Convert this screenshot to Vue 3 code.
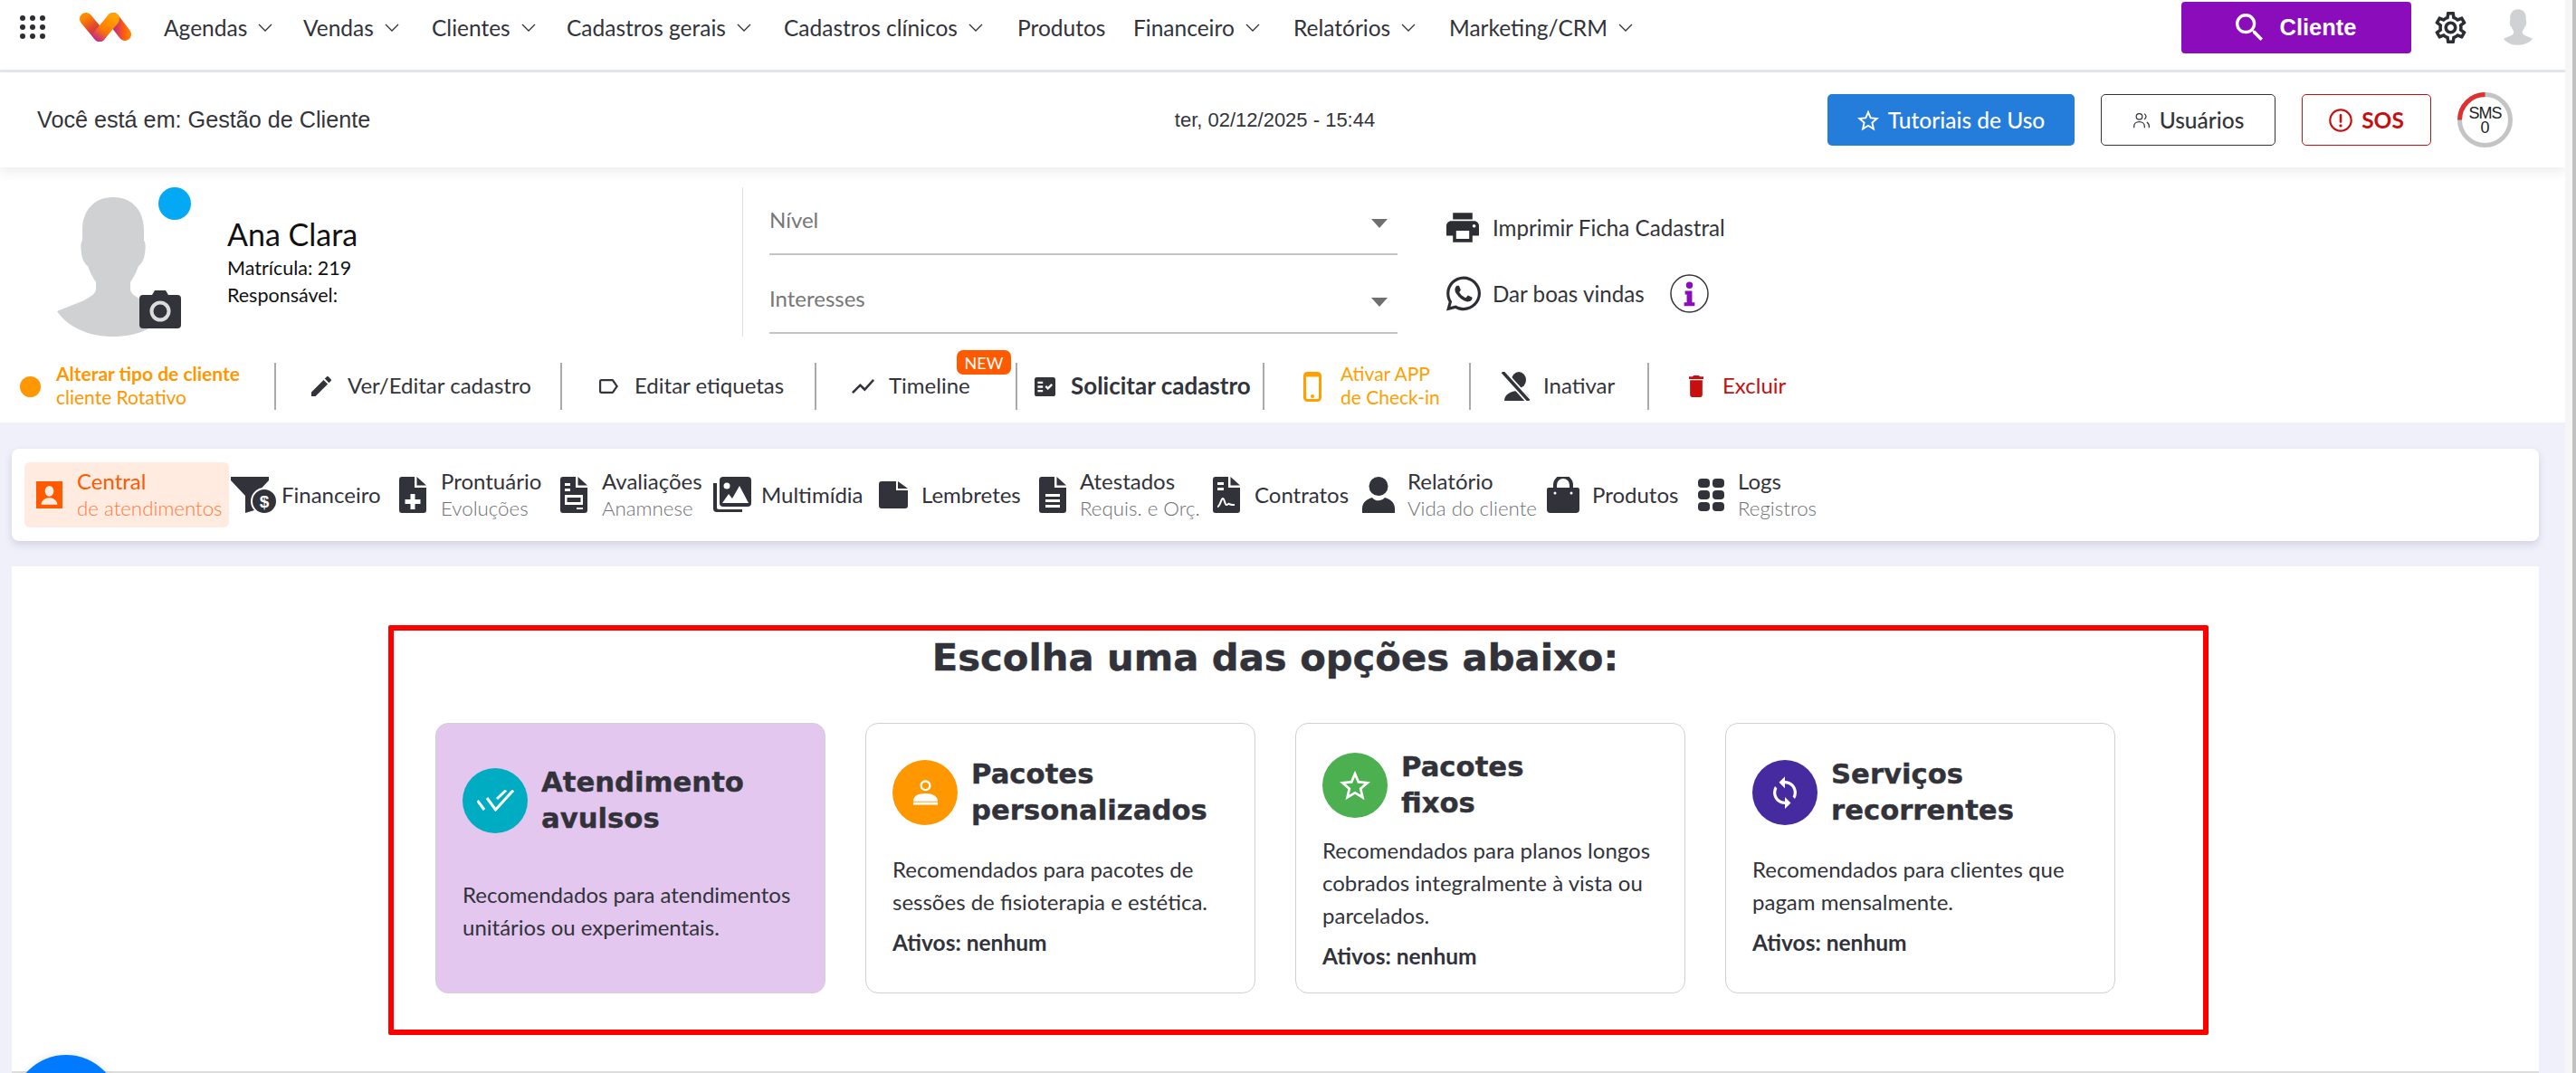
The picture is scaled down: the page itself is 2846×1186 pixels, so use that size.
<script setup>
const person = 'M62 0C84 0 96 16 96 36L96 48C98 50 98 56 97 62C96 70 93 74 90 76C88 82 85 88 81 94L81 102C82 108 88 110 94 114L124 126C112 144 88 154 62 154C36 154 12 144 0 126L30 114C36 110 42 108 43 102L43 94C39 88 36 82 34 76C31 74 28 70 27 62C26 56 26 50 28 48L28 36C28 16 40 0 62 0Z';
const docBody = 'M3 0H17V12H30V37a3 3 0 0 1-3 3H3a3 3 0 0 1-3-3V3a3 3 0 0 1 3-3Z';
const docFold = '<path d="M19.5 0L30 9.5H19.5Z"/>';

const icons = {
  search: { vb: '3 3 17.5 17.5', body: '<path d="M15.5 14h-.79l-.28-.27A6.471 6.471 0 0 0 16 9.5 6.5 6.5 0 1 0 9.5 16c1.61 0 3.09-.59 4.23-1.57l.27.28v.79l5 4.99L20.49 19l-4.99-5zm-6 0C7.01 14 5 11.99 5 9.5S7.01 5 9.5 5 14 7.01 14 9.5 11.99 14 9.5 14z"/>' },
  gear: { vb: '2 2 20 20', body: '<path d="M19.43 12.98c.04-.32.07-.64.07-.98 0-.34-.03-.66-.07-.98l2.11-1.65c.19-.15.24-.42.12-.64l-2-3.46c-.09-.16-.26-.25-.44-.25-.06 0-.12.01-.17.03l-2.49 1c-.52-.4-1.08-.73-1.69-.98l-.38-2.65C14.46 2.18 14.25 2 14 2h-4c-.25 0-.46.18-.49.42l-.38 2.65c-.61.25-1.17.59-1.69.98l-2.49-1c-.06-.02-.12-.03-.18-.03-.17 0-.34.09-.43.25l-2 3.46c-.13.22-.07.49.12.64l2.11 1.65c-.04.32-.07.65-.07.98 0 .33.03.66.07.98l-2.11 1.65c-.19.15-.24.42-.12.64l2 3.46c.09.16.26.25.44.25.06 0 .12-.01.17-.03l2.49-1c.52.4 1.08.73 1.69.98l.38 2.65c.03.24.24.42.49.42h4c.25 0 .46-.18.49-.42l.38-2.65c.61-.25 1.17-.59 1.69-.98l2.49 1c.06.02.12.03.18.03.17 0 .34-.09.43-.25l2-3.46c.12-.22.07-.49-.12-.64l-2.11-1.65zm-1.98-1.71c.04.31.05.52.05.73 0 .21-.02.43-.05.73l-.14 1.13.89.7 1.08.84-.7 1.21-1.27-.51-1.04-.42-.9.68c-.43.32-.84.56-1.25.73l-1.06.43-.16 1.13-.2 1.35h-1.4l-.19-1.35-.16-1.13-1.06-.43c-.43-.18-.83-.41-1.23-.71l-.91-.7-1.06.43-1.27.51-.7-1.21 1.08-.84.89-.7-.14-1.13c-.03-.31-.05-.54-.05-.74s.02-.43.05-.73l.14-1.13-.89-.7-1.08-.84.7-1.21 1.27.51 1.04.42.9-.68c.43-.32.84-.56 1.25-.73l1.06-.43.16-1.13.2-1.35h1.39l.19 1.35.16 1.13 1.06.43c.43.18.83.41 1.23.71l.91.7 1.06-.43 1.27-.51.7 1.21-1.07.85-.89.7.14 1.13zM12 8c-2.21 0-4 1.79-4 4s1.79 4 4 4 4-1.79 4-4-1.79-4-4-4zm0 6c-1.1 0-2-.9-2-2s.9-2 2-2 2 .9 2 2-.9 2-2 2z"/>' },
  star: { vb: '2 2 20 19', body: '<path d="M22 9.24l-7.19-.62L12 2 9.19 8.63 2 9.24l5.46 4.73L5.82 21 12 17.27 18.18 21l-1.63-7.03L22 9.24zM12 15.4l-3.76 2.27 1-4.28-3.32-2.88 4.38-.38L12 6.1l1.71 4.04 4.38.38-3.32 2.88 1 4.28L12 15.4z"/>' },
  users: { vb: '0 0 24 24', body: '<g fill="none" stroke="currentColor" stroke-width="1.5"><circle cx="9" cy="7" r="4"/><path d="M2 22v-2c0-3.5 3-6 7-6s7 2.500 7 6v2"/><path d="M15.500 3.300a4 4 0 0 1 0 7.400M19 14.600c1.800 1 3 2.900 3 5.400v2"/></g>' },
  alert: { vb: '0 0 24 24', body: '<circle cx="12" cy="12" r="10.800" fill="none" stroke="currentColor" stroke-width="2"/><rect x="10.800" y="5.500" width="2.400" height="9" rx="1"/><circle cx="12" cy="17.500" r="1.500"/>' },
  pencil: { vb: '3 3 18 18', body: '<path d="M3 17.250V21h3.750L17.810 9.940l-3.750-3.750L3 17.250zM20.710 7.040a1 1 0 0 0 0-1.410l-2.340-2.340a1 1 0 0 0-1.410 0l-1.830 1.830 3.750 3.750 1.830-1.830z"/>' },
  tag: { vb: '3 5 19 14', body: '<path d="M17.630 5.840C17.270 5.330 16.670 5 16 5L5 5.010C3.900 5.010 3 5.900 3 7v10c0 1.100.9 1.990 2 1.990L16 19c.67 0 1.270-.33 1.630-.84L22 12l-4.370-6.160zM16 17H5V7h11l3.550 5L16 17z"/>' },
  chart: { vb: '2 5.500 20 13', body: '<path d="M3.500 18.490l6-6.010 4 4L22 6.920l-1.410-1.410-7.090 7.970-4-4L2 16.990z"/>' },
  fact: { vb: '2 3 20 18', body: '<path d="M20 3H4c-1.100 0-2 .9-2 2v14c0 1.100.9 2 2 2h16c1.100 0 2-.9 2-2V5c0-1.100-.9-2-2-2zM10 17H5v-2h5v2zm0-4H5v-2h5v2zm0-4H5V7h5v2zm4.820 6L12 12.160l1.410-1.410 1.410 1.420L17.990 9l1.420 1.420L14.820 15z"/>' },
  mobile: { vb: '0 0 20 33', body: '<rect x="1.500" y="1.500" width="17" height="30" rx="3" fill="none" stroke="currentColor" stroke-width="3"/><rect x="1.500" y="1.500" width="17" height="4" /><circle cx="10" cy="27" r="2"/>' },
  personOff: { vb: '0 0 34 32', body: '<ellipse cx="20" cy="9" rx="8" ry="9"/><path d="M4 32c0-7 7-11 15-11s13 4 13 11z"/><path d="M3 1L31 32" stroke="#fff" stroke-width="7"/><path d="M2 0L31 32" stroke="currentColor" stroke-width="3.500"/>' },
  trash: { vb: '5 3 14 18', body: '<path d="M6 19c0 1.100.9 2 2 2h8c1.100 0 2-.9 2-2V7H6v12zM19 4h-3.500l-1-1h-5l-1 1H5v2h14V4z"/>' },
  print: { vb: '2 3 20 18', body: '<path d="M19 8H5c-1.660 0-3 1.340-3 3v6h4v4h12v-4h4v-6c0-1.660-1.340-3-3-3zm-3 11H8v-5h8v5zm3-7c-.55 0-1-.45-1-1s.45-1 1-1 1 .45 1 1-.45 1-1 1zm-1-9H6v4h12V3z"/>' },
  whatsapp: { vb: '0 32 448 448', body: '<path d="M380.900 97.100C339 55.100 283.200 32 223.900 32c-122.400 0-222 99.600-222 222 0 39.100 10.200 77.300 29.600 111L0 480l117.700-30.900c32.400 17.700 68.900 27 106.100 27h.1c122.300 0 224.100-99.600 224.100-222 0-59.300-25.200-115-67.100-157zm-157 341.600c-33.200 0-65.700-8.900-94-25.700l-6.700-4-69.800 18.300L72 359.200l-4.400-7c-18.500-29.400-28.200-63.300-28.200-98.200 0-101.700 82.800-184.500 184.600-184.500 49.300 0 95.600 19.200 130.400 54.100 34.800 34.900 56.200 81.200 56.100 130.500 0 101.800-84.900 184.600-186.600 184.600zm101.200-138.200c-5.500-2.800-32.800-16.200-37.900-18-5.100-1.900-8.800-2.800-12.500 2.800-3.700 5.600-14.300 18-17.600 21.800-3.200 3.700-6.500 4.200-12 1.400-32.600-16.300-54-29.100-75.500-66-5.700-9.800 5.700-9.100 16.300-30.300 1.800-3.700.9-6.900-.5-9.700-1.400-2.800-12.500-30.100-17.100-41.200-4.500-10.800-9.100-9.300-12.500-9.500-3.200-.2-6.900-.2-10.600-.2-3.700 0-9.700 1.400-14.800 6.900-5.100 5.600-19.400 19-19.400 46.300 0 27.300 19.900 53.700 22.600 57.400 2.800 3.700 39.100 59.700 94.800 83.800 35.200 15.200 49 16.500 66.600 13.900 10.700-1.600 32.800-13.400 37.400-26.400 4.600-13 4.600-24.100 3.200-26.400-1.300-2.500-5-3.900-10.500-6.600z"/>' },
  info: { vb: '0 0 44 44', body: '<circle cx="22" cy="22" r="21" fill="none" stroke="currentColor" stroke-width="1.500"/><circle cx="22" cy="12.500" r="3.800"/><path d="M17 19h8v13h3v4H16v-4h3v-9h-2z"/>' },
  tabPerson: { vb: '3 3 18 18', body: '<path fill-rule="evenodd" d="M5 2.500h14A2.500 2.500 0 0 1 21.500 5v14a2.500 2.500 0 0 1-2.500 2.500H5A2.500 2.500 0 0 1 2.500 19V5A2.500 2.500 0 0 1 5 2.500zM12 6a3 3.500 0 1 0 0 7 3 3.500 0 0 0 0-7zM6.500 18.500h11c0-2.500-2.500-4.500-5.500-4.500s-5.500 2-5.500 4.500z"/>' },
  funnel: { vb: '0 0 50 40', body: '<path d="M0 0H42V4L26 21V37L16 40V21L0 4Z"/><circle cx="37" cy="27" r="14" stroke="#fff" stroke-width="2"/><text x="37" y="34" text-anchor="middle" font-family="Liberation Sans" font-weight="700" font-size="19" fill="#fff">$</text>' },
  prontuario: { vb: '0 0 30 40', body: `<path d="${docBody}"/>${docFold}<path fill="#fff" d="M12.500 19h5v6h6v5h-6v6h-5v-6h-6v-5h6z"/>` },
  avaliacao: { vb: '0 0 30 40', body: `<path d="${docBody}"/>${docFold}<g fill="#fff"><rect x="5" y="7" width="6" height="3"/><rect x="5" y="13" width="6" height="3"/><rect x="5" y="20" width="20" height="11" /><rect x="18" y="34" width="7" height="2"/></g><rect x="7.500" y="23" width="15" height="5" />` },
  multimedia: { vb: '0 0 43 40', body: '<path d="M5 7H1v28a4 4 0 0 0 4 4h28v-3H7a2 2 0 0 1-2-2z" /><rect x="8" y="0" width="35" height="33" rx="4"/><circle cx="16" cy="10" r="3.500" fill="#fff"/><path fill="#fff" d="M11 29l7-10 4 5 8-14 10 19z"/>' },
  lembrete: { vb: '0 0 32 30', body: '<path d="M3 0H19V10H32V27a3 3 0 0 1-3 3H3a3 3 0 0 1-3-3V3a3 3 0 0 1 3-3Z"/><path d="M21 0L32 8H21Z"/>' },
  atestado: { vb: '0 0 30 40', body: `<path d="${docBody}"/>${docFold}<g fill="#fff"><rect x="7" y="19" width="16" height="3"/><rect x="7" y="25" width="16" height="3"/><rect x="7" y="31" width="16" height="3"/></g>` },
  contrato: { vb: '0 0 30 40', body: `<path d="${docBody}"/>${docFold}<g fill="#fff"><rect x="5" y="6" width="7" height="3"/><rect x="5" y="12" width="7" height="3"/></g><path d="M5 33c3 0 4-9 6-9s2 7 4 7 2-2 3-1 3 1 6 1" fill="none" stroke="#fff" stroke-width="2"/>` },
  relatorio: { vb: '0 0 36 40', body: '<ellipse cx="18" cy="10.500" rx="10.500" ry="10.500"/><path d="M0 40v-5c0-8 7-11 11-12a9 9 0 0 0 14 0c4 1 11 4 11 12v5z"/>' },
  bag: { vb: '0 0 36 40', body: '<path d="M2 12H34a2 2 0 0 1 2 2V36a4 4 0 0 1-4 4H4a4 4 0 0 1-4-4V14a2 2 0 0 1 2-2Z"/><path d="M9 15V9a9 9 0 0 1 18 0v6" fill="none" stroke="currentColor" stroke-width="4"/><circle cx="9" cy="18" r="1.500" fill="#fff"/><circle cx="27" cy="18" r="1.500" fill="#fff"/>' },
  logs: { vb: '0 0 29 36', body: '<rect x="0" y="0" width="13" height="10" rx="4"/><rect x="16" y="0" width="13" height="10" rx="4"/><rect x="0" y="13" width="13" height="10" rx="4"/><rect x="16" y="13" width="13" height="10" rx="4"/><rect x="0" y="26" width="13" height="10" rx="4"/><rect x="16" y="26" width="13" height="10" rx="4"/>' },
  sync: { vb: '4 1 16 22', body: '<path d="M12 4V1L8 5l4 4V6c3.310 0 6 2.690 6 6 0 1.010-.25 1.970-.7 2.800l1.460 1.460A7.930 7.930 0 0 0 20 12c0-4.420-3.580-8-8-8zm0 14c-3.310 0-6-2.690-6-6 0-1.010.25-1.970.7-2.800L5.240 7.740A7.930 7.930 0 0 0 4 12c0 4.420 3.580 8 8 8v3l4-4-4-4v3z"/>' },
  doubleCheck: { vb: '0 0 41 24', body: '<g fill="none" stroke="currentColor" stroke-width="3"><path d="M0.500 12L8 22"/><path d="M11 9L20.500 22L40 0.500"/><path d="M22 10L32 0.500"/></g>' },
  personLine: { vb: '0 0 30 28', body: '<circle cx="15" cy="6" r="5" fill="none" stroke="currentColor" stroke-width="2.500"/><path d="M1 24c0-6 6-9 14-9s14 3 14 9z"/><rect x="1" y="25" width="28" height="3"/>' },
  starLine: { vb: '2 2 20 19', body: '<path d="M22 9.240l-7.190-.62L12 2 9.190 8.630 2 9.240l5.460 4.730L5.820 21 12 17.270 18.180 21l-1.630-7.030L22 9.240zM12 15.400l-3.760 2.270 1-4.280-3.320-2.880 4.380-.38L12 6.100l1.710 4.040 4.380.38-3.320 2.880 1 4.280L12 15.400z"/>' },
};

const menu = [
  { label: 'Agendas', w: 154, caret: true },
  { label: 'Vendas', w: 142, caret: true },
  { label: 'Clientes', w: 149, caret: true },
  { label: 'Cadastros gerais', w: 240, caret: true },
  { label: 'Cadastros clínicos', w: 258, caret: true },
  { label: 'Produtos', w: 128 },
  { label: 'Financeiro', w: 177, caret: true },
  { label: 'Relatórios', w: 172, caret: true },
  { label: 'Marketing/CRM', w: 194, caret: true },
];

const actions = [
  { w: 305, pl: 22, dot: true, gap: 17, lines: ['Alterar tipo de cliente', 'cliente Rotativo'], tone: 'orange', bold: true },
  { w: 316, pl: 39, icon: 'pencil', iw: 22, ih: 22, gap: 18, label: 'Ver/Editar cadastro' },
  { w: 281, pl: 41, icon: 'tag', iw: 21, ih: 16, gap: 18, label: 'Editar etiquetas' },
  { w: 222, pl: 39, icon: 'chart', iw: 25, ih: 16, gap: 16, label: 'Timeline', badge: 'NEW' },
  { w: 273, pl: 19, icon: 'fact', iw: 23, ih: 21, gap: 17, label: 'Solicitar cadastro', strong: true },
  { w: 228, pl: 43, icon: 'mobile', iw: 20, ih: 33, gap: 21, lines: ['Ativar APP', 'de Check-in'], tone: 'amber' },
  { w: 197, pl: 33, icon: 'personOff', iw: 34, ih: 32, gap: 13, label: 'Inativar' },
  { w: 200, pl: 44, icon: 'trash', iw: 16, ih: 24, gap: 21, label: 'Excluir', tone: 'red', last: true },
];

const tabs = [
  { w: 228, icon: 'tabPerson', iw: 29, ih: 30, gap: 16, title: 'Central', sub: 'de atendimentos', active: true },
  { w: 186, icon: 'funnel', iw: 50, ih: 40, gap: 6, title: 'Financeiro' },
  { w: 178, icon: 'prontuario', iw: 30, ih: 40, gap: 16, title: 'Prontuário', sub: 'Evoluções' },
  { w: 168, icon: 'avaliacao', iw: 30, ih: 40, gap: 16, title: 'Avaliações', sub: 'Anamnese' },
  { w: 184, icon: 'multimedia', iw: 43, ih: 40, gap: 11, title: 'Multimídia' },
  { w: 177, icon: 'lembrete', iw: 32, ih: 30, gap: 15, title: 'Lembretes' },
  { w: 192, icon: 'atestado', iw: 30, ih: 40, gap: 15, title: 'Atestados', sub: 'Requis. e Orç.' },
  { w: 165, icon: 'contrato', iw: 30, ih: 40, gap: 16, title: 'Contratos' },
  { w: 204, icon: 'relatorio', iw: 36, ih: 40, gap: 14, title: 'Relatório', sub: 'Vida do cliente' },
  { w: 167, icon: 'bag', iw: 36, ih: 40, gap: 14, title: 'Produtos' },
  { w: 140, icon: 'logs', iw: 29, ih: 36, gap: 15, title: 'Logs', sub: 'Registros' },
];

const plans = [
  {
    title: ['Atendimento', 'avulsos'], text: ['Recomendados para atendimentos', 'unitários ou experimentais.'],
    color: '#00acc1', icon: 'doubleCheck', iw: 41, ih: 24, top: 45, space: 46, selected: true,
  },
  {
    title: ['Pacotes', 'personalizados'], text: ['Recomendados para pacotes de', 'sessões de fisioterapia e estética.'],
    color: '#ff9800', icon: 'personLine', iw: 29, ih: 28, top: 36, space: 27, active: 'Ativos: nenhum',
  },
  {
    title: ['Pacotes', 'fixos'], text: ['Recomendados para planos longos', 'cobrados integralmente à vista ou', 'parcelados.'],
    color: '#4caf50', icon: 'starLine', iw: 34, ih: 36, top: 28, space: 14, active: 'Ativos: nenhum',
  },
  {
    title: ['Serviços', 'recorrentes'], text: ['Recomendados para clientes que', 'pagam mensalmente.'],
    color: '#452aa0', icon: 'sync', iw: 26, ih: 36, top: 36, space: 27, active: 'Ativos: nenhum',
  },
];
</script>

<template>
  <div class="shell">
    <div class="page">
      <header class="topnav">
        <div class="dots"><i v-for="n in 9" :key="n" /></div>
        <svg class="logo" viewBox="0 0 57 32" width="57" height="32">
          <defs>
            <linearGradient id="lg-a" gradientUnits="userSpaceOnUse" x1="6" y1="4" x2="22" y2="30">
              <stop offset="0" stop-color="#ff8a00" />
              <stop offset="0.5" stop-color="#e0442e" />
              <stop offset="1" stop-color="#b5219b" />
            </linearGradient>
            <linearGradient id="lg-b" gradientUnits="userSpaceOnUse" x1="18" y1="30" x2="38" y2="2">
              <stop offset="0" stop-color="#c42a8c" />
              <stop offset="0.4" stop-color="#ff7a00" />
              <stop offset="1" stop-color="#ffa800" />
            </linearGradient>
            <linearGradient id="lg-c" gradientUnits="userSpaceOnUse" x1="36" y1="24" x2="57" y2="24">
              <stop offset="0" stop-color="#b5219b" />
              <stop offset="0.6" stop-color="#ff5a10" />
              <stop offset="1" stop-color="#ff8a00" />
            </linearGradient>
          </defs>
          <path d="M7 7L22 25" stroke="url(#lg-a)" stroke-width="14" stroke-linecap="round" />
          <path d="M37 7L50 24" stroke="url(#lg-c)" stroke-width="14" stroke-linecap="round" />
          <path d="M22 25L37 7" stroke="url(#lg-b)" stroke-width="14" stroke-linecap="round" />
        </svg>
        <nav class="menu">
          <a v-for="m in menu" :key="m.label" class="menu-item" :style="{ width: m.w + 'px' }">
            {{ m.label }}
            <svg v-if="m.caret" class="caret" viewBox="0 0 16 9" width="16" height="9"><path d="M1 1l7 7 7-7" /></svg>
          </a>
        </nav>
        <div class="nav-right">
          <button class="btn-client">
            <svg :viewBox="icons.search.vb" width="30" height="30" fill="currentColor" v-html="icons.search.body" />
            Cliente
          </button>
          <svg class="gear" :viewBox="icons.gear.vb" width="35" height="35" fill="#2d2e33" v-html="icons.gear.body" />
          <svg class="mini-avatar" viewBox="0 0 124 154" width="32" height="40"><path :d="person" /></svg>
        </div>
      </header>

      <section class="crumb">
        <div class="crumb-text">Você está em: Gestão de Cliente</div>
        <div class="crumb-date">ter, 02/12/2025 - 15:44</div>
        <div class="crumb-actions">
          <button class="pill pill-blue">
            <svg :viewBox="icons.star.vb" width="24" height="24" fill="currentColor" v-html="icons.star.body" />
            Tutoriais de Uso
          </button>
          <button class="pill pill-line">
            <svg :viewBox="icons.users.vb" width="20" height="20" fill="currentColor" v-html="icons.users.body" />
            Usuários
          </button>
          <button class="pill pill-sos">
            <svg :viewBox="icons.alert.vb" width="26" height="26" fill="currentColor" v-html="icons.alert.body" />
            SOS
          </button>
          <div class="sms">
            <svg viewBox="0 0 61 61" width="61" height="61">
              <circle cx="30.5" cy="30.5" r="28" fill="none" stroke="#c4c4c4" stroke-width="5" />
              <path d="M2.500 30.500A28 28 0 0 1 30.500 2.500" fill="none" stroke="#e03131" stroke-width="5" />
            </svg>
            <div class="sms-text"><span>SMS</span><b>0</b></div>
          </div>
        </div>
      </section>

      <section class="client">
        <div class="client-top">
          <div class="profile">
            <div class="avatar">
              <svg viewBox="0 0 124 154" width="124" height="154"><path :d="person" /></svg>
              <span class="status" />
              <svg class="camera" viewBox="0 0 46 42" width="46" height="42">
                <path d="M14 5L17 0H29L32 5H42a4 4 0 0 1 4 4V38a4 4 0 0 1-4 4H4a4 4 0 0 1-4-4V9a4 4 0 0 1 4-4Z" fill="#33343a" />
                <circle cx="23" cy="23" r="9.500" fill="none" stroke="#dcdcdc" stroke-width="4" />
              </svg>
            </div>
            <div class="who">
              <div class="who-name">Ana Clara</div>
              <div class="who-line">Matrícula: 219</div>
              <div class="who-line">Responsável:</div>
            </div>
          </div>
          <div class="selects">
            <div class="select">Nível<i class="tri" /></div>
            <div class="select">Interesses<i class="tri" /></div>
          </div>
          <div class="links">
            <div class="link link-print">
              <svg :viewBox="icons.print.vb" width="36" height="33" fill="#2d2e33" v-html="icons.print.body" />
              Imprimir Ficha Cadastral
            </div>
            <div class="link link-wa">
              <svg :viewBox="icons.whatsapp.vb" width="38" height="39" fill="#2d2e33" v-html="icons.whatsapp.body" />
              Dar boas vindas
              <svg class="info" :viewBox="icons.info.vb" width="43" height="43" fill="#8a0cba" v-html="icons.info.body" />
            </div>
          </div>
        </div>

        <div class="actions">
          <div
            v-for="a in actions"
            :key="a.label || a.lines[0]"
            class="action"
            :class="{ 'action-last': a.last, ['tone-' + a.tone]: a.tone }"
            :style="{ width: a.w + 'px', paddingLeft: a.pl + 'px', gap: a.gap + 'px' }"
          >
            <span v-if="a.dot" class="action-dot" />
            <svg
              v-else
              :viewBox="icons[a.icon].vb"
              :width="a.iw"
              :height="a.ih"
              fill="currentColor"
              preserveAspectRatio="none"
              v-html="icons[a.icon].body"
            />
            <div v-if="a.lines" class="action-lines" :class="{ 'is-bold': a.bold }">
              <b v-if="a.bold">{{ a.lines[0] }}</b><span v-else>{{ a.lines[0] }}</span>
              <span>{{ a.lines[1] }}</span>
            </div>
            <span v-else class="action-label" :class="{ strong: a.strong }">{{ a.label }}</span>
            <span v-if="a.badge" class="badge">{{ a.badge }}</span>
          </div>
        </div>
      </section>

      <main class="content">
        <div class="tabs">
          <div v-for="t in tabs" :key="t.title" class="tab-cell" :style="{ width: t.w + 'px' }">
            <div class="tab" :class="{ active: t.active }" :style="{ gap: t.gap + 'px' }">
              <svg
                :viewBox="icons[t.icon].vb"
                :width="t.iw"
                :height="t.ih"
                fill="currentColor"
                preserveAspectRatio="none"
                v-html="icons[t.icon].body"
              />
              <div class="tab-text">
                <span class="tab-title">{{ t.title }}</span>
                <span v-if="t.sub" class="tab-sub">{{ t.sub }}</span>
              </div>
            </div>
          </div>
        </div>

        <div class="panel">
          <h1 class="panel-title">Escolha uma das opções abaixo:</h1>
          <div class="plans">
            <article
              v-for="p in plans"
              :key="p.title[0] + p.title[1]"
              class="plan"
              :class="{ selected: p.selected }"
              :style="{ paddingTop: p.top + 'px' }"
            >
              <div class="plan-head" :style="{ marginBottom: p.space + 'px' }">
                <span class="plan-circle" :style="{ background: p.color }">
                  <svg
                    :viewBox="icons[p.icon].vb"
                    :width="p.iw"
                    :height="p.ih"
                    fill="currentColor"
                    v-html="icons[p.icon].body"
                  />
                </span>
                <h2>{{ p.title[0] }}<br />{{ p.title[1] }}</h2>
              </div>
              <p class="plan-text"><template v-for="line in p.text" :key="line">{{ line }}<br /></template></p>
              <p v-if="p.active" class="plan-active">{{ p.active }}</p>
            </article>
          </div>
          <div class="highlight" />
        </div>
      </main>
      <span class="fab" />
    </div>
    <div class="scrollbar"><i /></div>
  </div>
</template>

<style>
html,
body {
  margin: 0;
  overflow: hidden;
  background: #eff0fa;
}
</style>

<style scoped>
* {
  box-sizing: border-box;
}

.shell {
  display: flex;
  height: 1186px;
  width: 2846px;
  overflow: hidden;
  font-family: 'Lato', 'Open Sans', sans-serif;
  color: #32333a;
}

.page {
  position: relative;
  width: 2834px;
  height: 1186px;
  overflow: hidden;
  background: #eff0fa;
}

.scrollbar {
  flex: 1;
  background: #f6f6f6;
  padding-left: 8px;
}

.scrollbar i {
  display: block;
  height: 100%;
  background: #c1c1c1;
}

/* top bar */
.topnav {
  height: 80px;
  display: flex;
  align-items: center;
  padding: 0 36px 17px 22px;
  background: #fff;
  border-bottom: 3px solid #e6e8f0;
}

.dots {
  width: 28px;
  height: 26px;
  display: grid;
  grid-template-columns: repeat(3, 6px);
  grid-template-rows: repeat(3, 6px);
  justify-content: space-between;
  align-content: space-between;
  margin-right: 38px;
}

.dots i {
  background: #2d2e33;
  border-radius: 50%;
}

.logo {
  margin-right: 36px;
}

.menu {
  display: flex;
}

.menu-item {
  display: flex;
  align-items: center;
  gap: 12px;
  font-size: 24.5px;
  white-space: nowrap;
  color: #32333a;
}

.caret {
  fill: none;
  stroke: #32333a;
  stroke-width: 1.3;
  flex: none;
}

.nav-right {
  margin-left: auto;
  display: flex;
  align-items: center;
}

button {
  font-family: inherit;
  cursor: pointer;
}

.btn-client {
  width: 254px;
  height: 57px;
  display: flex;
  align-items: center;
  justify-content: center;
  gap: 18px;
  border: 0;
  border-radius: 4px;
  background: #8a0cba;
  color: #fff;
  font-family: 'Liberation Sans', sans-serif;
  font-weight: 700;
  font-size: 25.5px;
}

.gear {
  margin-left: 26px;
}

.mini-avatar {
  margin-left: 41px;
  fill: #d0d1d3;
}

/* breadcrumb */
.crumb {
  position: relative;
  z-index: 1;
  height: 105px;
  display: grid;
  grid-template-columns: 1fr auto 1fr;
  align-items: center;
  padding: 0 58px 0 41px;
  background: #fff;
  box-shadow: 0 4px 12px rgba(60, 60, 80, 0.1);
  font-family: 'Liberation Sans', sans-serif;
}

.crumb-text {
  font-size: 25.2px;
  color: #33343a;
}

.crumb-date {
  font-size: 22px;
  color: #33343a;
}

.crumb-actions {
  display: flex;
  align-items: center;
  justify-content: flex-end;
  gap: 29px;
}

.pill {
  height: 57px;
  display: flex;
  align-items: center;
  justify-content: center;
  gap: 10px;
  border-radius: 5px;
  font-family: 'Lato', sans-serif;
  font-size: 24.5px;
  font-weight: 500;
}

.pill-blue {
  width: 273px;
  border: 0;
  background: #247cdb;
  color: #fff;
}

.pill-line {
  width: 193px;
  background: #fff;
  border: 1.500px solid #33343a;
  color: #33343a;
}

.pill-sos {
  width: 143px;
  background: #fff;
  border: 1.500px solid #c70f0f;
  color: #c70f0f;
  font-weight: 700;
}

.sms {
  position: relative;
  width: 61px;
  height: 61px;
}

.sms-text {
  position: absolute;
  inset: 0;
  display: flex;
  flex-direction: column;
  align-items: center;
  justify-content: center;
  font-family: 'Liberation Sans', sans-serif;
  line-height: 16px;
  font-size: 18px;
  color: #222;
}

.sms-text span {
  letter-spacing: -1px;
}

.sms-text b {
  font-weight: 400;
}

/* client block */
.client {
  position: relative;
  background: #fff;
}

.client-top {
  height: 202px;
  padding-top: 10px;
  display: flex;
  align-items: flex-start;
}

.profile {
  width: 821px;
  height: 165px;
  margin-top: 12px;
  padding-left: 63px;
  display: flex;
  border-right: 1px solid #ddd;
}

.avatar {
  position: relative;
  width: 188px;
  padding-top: 11px;
  fill: #d0d1d3;
}

.status {
  position: absolute;
  left: 112px;
  top: 0;
  width: 36px;
  height: 36px;
  border-radius: 50%;
  background: #03a9f4;
}

.camera {
  position: absolute;
  left: 91px;
  top: 114px;
}

.who {
  padding-top: 30px;
  color: #111;
}

.who-name {
  font-size: 34px;
  line-height: 44px;
}

.who-line {
  font-size: 21.5px;
  line-height: 30px;
}

.selects {
  width: 694px;
  margin-left: 29px;
}

.select {
  position: relative;
  height: 87px;
  padding-top: 34px;
  border-bottom: 2px solid #c4c4c4;
  font-size: 24px;
  line-height: 28px;
  color: #777;
}

.tri {
  position: absolute;
  right: 11px;
  top: 47px;
  border-left: 9.500px solid transparent;
  border-right: 9.500px solid transparent;
  border-top: 10px solid #6f6f6f;
}

.links {
  margin-left: 54px;
  padding-top: 36px;
}

.link {
  display: flex;
  align-items: center;
  gap: 15px;
  height: 40px;
  font-size: 24.2px;
  color: #33343a;
  white-space: nowrap;
}

.link-print {
  margin-bottom: 33px;
}

.link-wa {
  gap: 13px;
}

.info {
  margin-left: 15px;
}

.actions {
  height: 80px;
  display: flex;
  align-items: center;
}

.action {
  position: relative;
  height: 52px;
  display: flex;
  align-items: center;
  flex: none;
  border-right: 2px solid #aaa;
  font-size: 24px;
  color: #33343a;
  white-space: nowrap;
}

.action-last {
  border-right: 0;
}

.action-dot {
  width: 23px;
  height: 23px;
  border-radius: 50%;
  background: #ff9800;
  flex: none;
}

.action-label {
  margin-top: -3px;
}

.action-lines {
  display: flex;
  flex-direction: column;
  font-size: 21px;
  line-height: 26px;
  margin-top: -3px;
}

.action-lines b {
  font-weight: 700;
}

.strong {
  font-weight: 700;
  font-size: 26px;
}

.tone-orange {
  color: #ff9800;
}

.tone-amber {
  color: #ffa000;
}

.tone-red {
  color: #c70f0f;
}

.badge {
  position: absolute;
  left: 155px;
  top: -14px;
  width: 60px;
  height: 27px;
  display: flex;
  align-items: center;
  justify-content: center;
  border-radius: 7px;
  background: #ff5a00;
  color: #fff;
  font-size: 18px;
}

/* tabs + main panel */
.content {
  padding: 29px 29px 0 13px;
}

.tabs {
  height: 102px;
  display: flex;
  align-items: center;
  padding-left: 14px;
  border-radius: 8px;
  background: #fff;
  box-shadow: 0 4px 8px rgba(50, 50, 90, 0.15);
  margin-bottom: 28px;
}

.tab-cell {
  flex: none;
}

.tab {
  height: 72px;
  display: flex;
  align-items: center;
  white-space: nowrap;
  color: #32333a;
}

.tab.active {
  width: 226px;
  padding-left: 13px;
  border-radius: 6px;
  background: #ffebe0;
  color: #ff5a00;
}

.tab-text {
  display: flex;
  flex-direction: column;
}

.tab-title {
  font-size: 24px;
  line-height: 30px;
}

.tab-sub {
  font-size: 22.3px;
  line-height: 30px;
  color: #6f6f74;
  font-weight: 300;
}

.tab.active .tab-sub {
  color: #ff7a3c;
}

.panel {
  position: relative;
  height: 560px;
  padding-top: 71px;
  background: #fff;
  border-bottom: 2px solid #ddd;
}

.panel-title {
  margin: 0 0 42px;
  text-align: center;
  font-family: 'DejaVu Sans', sans-serif;
  font-size: 41.7px;
  line-height: 60px;
  font-weight: 700;
  -webkit-text-stroke: 0.5px currentColor;
}

.plans {
  display: flex;
  justify-content: center;
  gap: 44px;
}

.plan {
  width: 431px;
  height: 299px;
  padding: 0 29px;
  display: flex;
  flex-direction: column;
  border: 1.500px solid #cfcfd8;
  border-radius: 14px;
  background: #fff;
}

.plan.selected {
  background: #e3c7ef;
}

.plan-head {
  display: flex;
  align-items: center;
  gap: 15px;
}

.plan-circle {
  width: 72px;
  height: 72px;
  flex: none;
  display: flex;
  align-items: center;
  justify-content: center;
  border-radius: 50%;
  color: #fff;
}

.plan-head h2 {
  margin: 0;
  font-family: 'DejaVu Sans', sans-serif;
  font-size: 30.7px;
  line-height: 40px;
  font-weight: 700;
  -webkit-text-stroke: 0.4px currentColor;
}

.plan-text {
  margin: 0;
  font-size: 24px;
  line-height: 36px;
  color: #32333a;
  white-space: nowrap;
}

.plan-active {
  margin: 9px 0 0;
  font-size: 24.5px;
  line-height: 36px;
  font-weight: 700;
}

.highlight {
  position: absolute;
  left: 416px;
  top: 65px;
  width: 2011px;
  height: 453px;
  border: 6px solid #ff0000;
  border-radius: 2px;
  pointer-events: none;
}

.fab {
  position: absolute;
  left: 14px;
  top: 1166px;
  width: 118px;
  height: 118px;
  border-radius: 50%;
  background: #007bff;
  box-shadow: 0 0 10px rgba(0, 0, 0, 0.1);
}
</style>
